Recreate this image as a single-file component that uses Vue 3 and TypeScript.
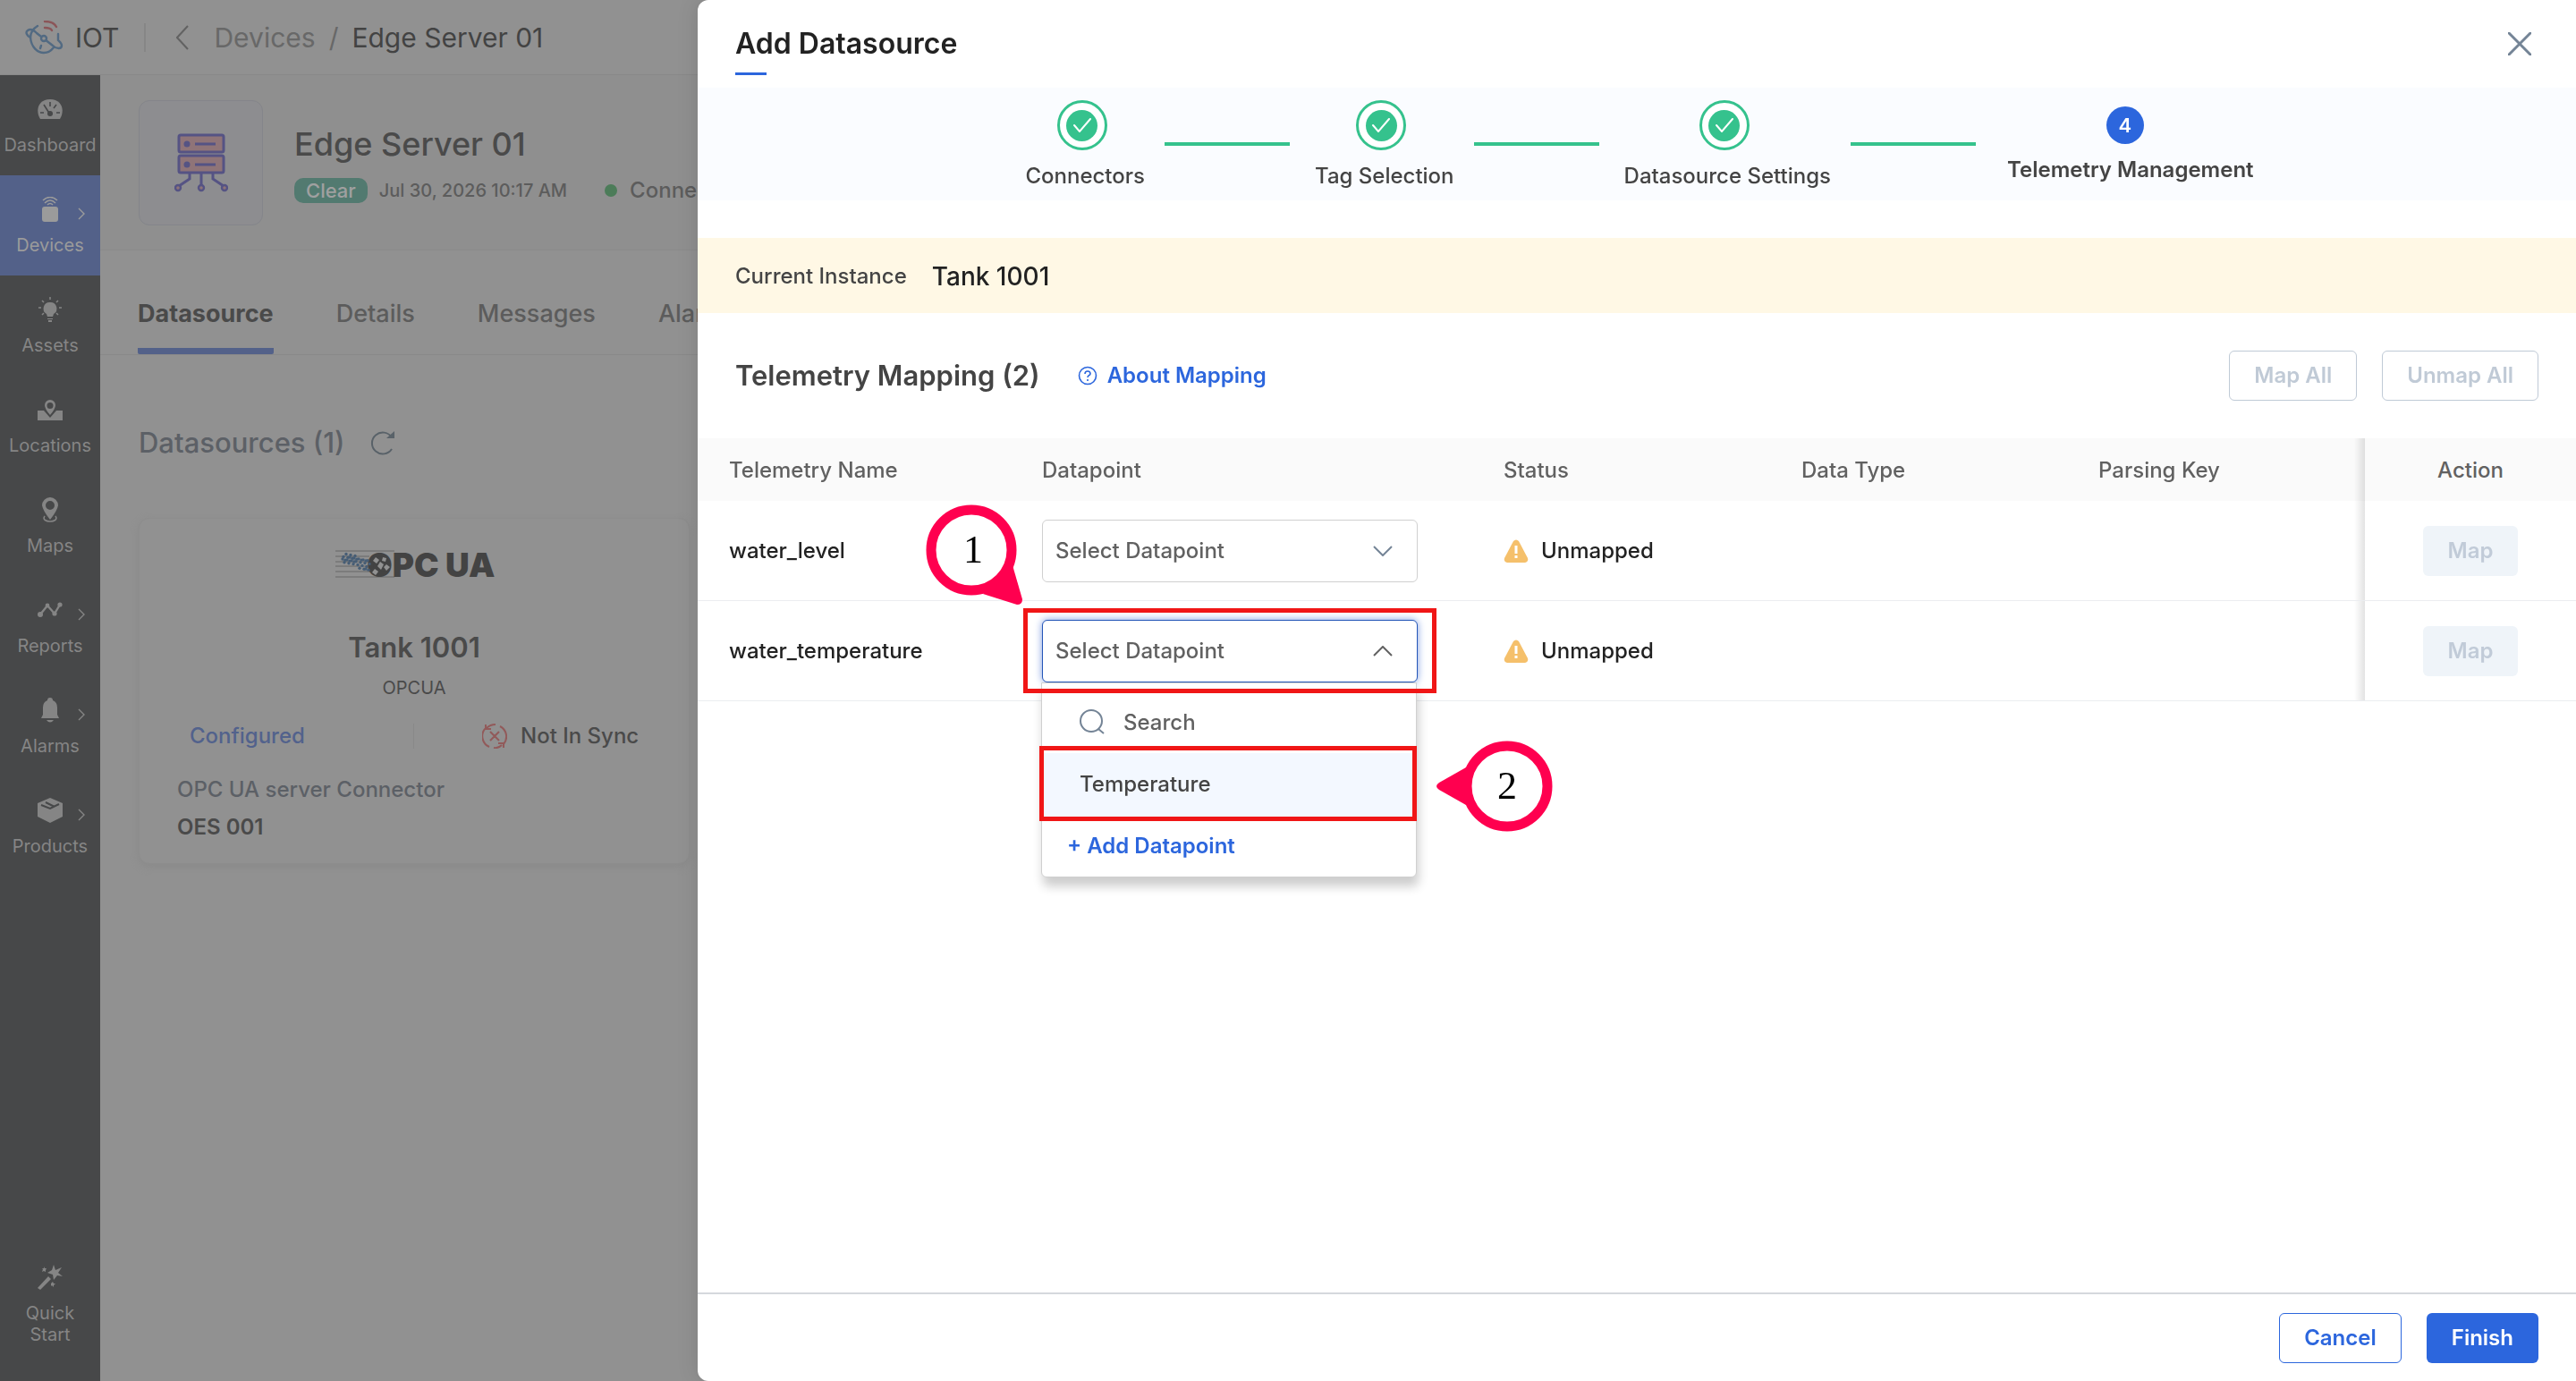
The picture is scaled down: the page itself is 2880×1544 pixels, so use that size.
<script setup lang="ts">
import { ref } from 'vue'

interface NavItem { label: string; icon: string; arrow?: boolean; active?: boolean }
interface Row { name: string; open: boolean }

const nav: NavItem[] = [
  { label: 'Dashboard', icon: 'gauge' },
  { label: 'Devices', icon: 'device', arrow: true, active: true },
  { label: 'Assets', icon: 'bulb' },
  { label: 'Locations', icon: 'location' },
  { label: 'Maps', icon: 'map' },
  { label: 'Reports', icon: 'report', arrow: true },
  { label: 'Alarms', icon: 'bell', arrow: true },
  { label: 'Products', icon: 'box', arrow: true },
]
const tabs = ['Datasource', 'Details', 'Messages', 'Alarms']
const steps = ['Connectors', 'Tag Selection', 'Datasource Settings', 'Telemetry Management']
const rows: Row[] = [
  { name: 'water_level', open: false },
  { name: 'water_temperature', open: true },
]
const query = ref('')
</script>

<template>
  <div class="app">
    <header class="topbar">
      <svg class="brand-logo" viewBox="0 0 44 38" fill="none" stroke-width="2.4" stroke-linecap="round">
        <g stroke="#526a82">
          <path d="M3 11 C0 13 2 17 6 19 M3 11 C6 9 10 11 13 14 L31 28 C35 32 41 32 41 28 C41 25 38 23 37 22 L37 15" />
          <path d="M14 6 C9 9 6 13 6 19 C7 30 14 36 21 36 C25 36 29 34 32 30" />
          <path d="M18 28 L17 31" />
          <circle cx="21" cy="20" r="3" fill="#919191" />
        </g>
        <g stroke="#8b5558"><path d="M22 8 C26 8 29 9 30 11 M22 1 C28 1 33 3 35 7" /></g>
      </svg>
      <span class="brand">IOT</span>
      <span class="topbar-rule"></span>
      <svg class="back" viewBox="0 0 14 28" fill="none" stroke="#626262" stroke-width="2"><path d="M13 1 L1 14 L13 27" /></svg>
      <nav class="crumbs"><a href="#devices">Devices</a><span class="slash">/</span><span>Edge Server 01</span></nav>
    </header>

    <div class="body">
      <aside class="sidebar">
        <a v-for="item in nav" :key="item.label" href="#" class="nav-item" :class="{ active: item.active }">
          <svg class="nav-icon" viewBox="0 0 28 28" fill="currentColor">
            <template v-if="item.icon === 'gauge'">
              <path d="M3 25 C-3 15 1 3 14 3 C27 3 31 15 25 25 Z" />
              <g stroke="#474849" stroke-width="1.6" fill="none"><path d="M14 6 V11 M7 9 L14 20 M21 9 L18 13 M3 18 H7 M21 18 H25" /></g>
              <circle cx="14" cy="19" r="3" fill="#474849" />
            </template>
            <template v-else-if="item.icon === 'device'">
              <rect x="5" y="11" width="18" height="17" rx="3" />
              <g fill="none" stroke="currentColor" stroke-width="1.6"><path d="M6 4 Q14 -3 22 4 M8 7 Q14 1 20 7 M11 9 Q14 6 17 9" /></g>
            </template>
            <template v-else-if="item.icon === 'bulb'">
              <path d="M14 6 A7 7 0 0 1 18 19 L17 22 H11 L10 19 A7 7 0 0 1 14 6 Z M11 24 H17 V25 H11 Z M12 26 H16 V28 H12 Z" />
              <path d="M14 0 V3 M5 4 L7 6 M23 4 L21 6 M1 12 H4 M24 12 H27 M5 20 L7 18 M23 20 L21 18" stroke="currentColor" stroke-width="1.5" />
            </template>
            <template v-else-if="item.icon === 'location'">
              <path d="M0 15 H7 L14 23 L21 15 H28 V26 H0 Z" />
              <path fill-rule="evenodd" d="M14 3 A6 6 0 0 1 20 9 Q20 13 14 20 Q8 13 8 9 A6 6 0 0 1 14 3 Z M14 6 A3.5 3.5 0 1 0 14 13 A3.5 3.5 0 1 0 14 6 Z" />
            </template>
            <template v-else-if="item.icon === 'map'">
              <path fill-rule="evenodd" d="M14 0 A9 9 0 0 1 23 9 Q22 15 14 25 Q6 15 5 9 A9 9 0 0 1 14 0 Z M14 4 A5 5 0 1 0 14 14 A5 5 0 1 0 14 4 Z" />
              <path d="M8 21 C5 25 10 27 14 27 C18 27 23 25 20 21" fill="none" stroke="currentColor" stroke-width="1.6" />
            </template>
            <template v-else-if="item.icon === 'report'">
              <path d="M3 19 L11 9 L19 18 L25 8" fill="none" stroke="currentColor" stroke-width="2.4" />
              <circle cx="3" cy="19" r="3" /><circle cx="11" cy="9" r="2.4" /><circle cx="19" cy="18" r="2.6" /><circle cx="25" cy="8" r="2.6" />
            </template>
            <template v-else-if="item.icon === 'bell'">
              <path d="M14 0 A3 3 0 0 1 17 3 Q22 5 22 11 V19 L24 23 H4 L6 19 V11 Q6 5 11 3 A3 3 0 0 1 14 0 Z M10 25 H18 Q14 30 10 25 Z" />
            </template>
            <template v-else>
              <path d="M14 0 L28 6 V21 L14 28 L0 21 V6 Z" />
              <path d="M4 8 L14 12 L24 7 M9 5 L19 10" stroke="#474849" stroke-width="2" fill="none" />
            </template>
          </svg>
          <span>{{ item.label }}</span>
          <svg v-if="item.arrow" class="nav-arrow" viewBox="0 0 8 14" fill="none" stroke="currentColor" stroke-width="1.4"><path d="M1 1 L7 7 L1 13" /></svg>
        </a>
        <a href="#" class="nav-item quick">
          <svg class="nav-icon" viewBox="0 0 28 28" fill="currentColor">
            <path d="M0 26 L12 13 L15 16 L3 28 Z M18 0 L20 6 L27 3 L23 9 L28 13 L22 12 L18 17 L17 11 L11 9 L16 6 Z" />
            <path d="M7 2 L8 4 L10 4 L9 6 L9 8 L7 7 L5 8 L6 5 L5 4 L7 4 Z M17 19 L18 21 L20 21 L18 23 L18 25 L16 23 L15 24 L15 21 Z" />
          </svg>
          <span>Quick<br />Start</span>
        </a>
      </aside>

      <main class="page">
        <section class="device">
          <div class="device-pic">
            <svg viewBox="0 0 60 66" fill="none" stroke="#555384" stroke-width="3">
              <rect x="5" y="2" width="50" height="19" rx="2" fill="#8f7478" /><rect x="5" y="25" width="50" height="19" rx="2" fill="#8f7478" />
              <path d="M23 12 H46 M23 35 H46 M30 45 V59 M17 45 V51 L5 59 M43 45 V51 L55 59" />
              <g fill="#555384" stroke="none"><circle cx="14" cy="12" r="3.5" /><circle cx="14" cy="35" r="3.5" /></g>
              <g fill="#8f7478" stroke-width="2.4"><circle cx="4" cy="61" r="3" /><circle cx="30" cy="61" r="3" /><circle cx="56" cy="61" r="3" /></g>
            </svg>
          </div>
          <div class="device-info">
            <h1>Edge Server 01</h1>
            <p><span class="badge">Clear</span><span class="date">Jul 30, 2026 10:17 AM</span><i class="dot"></i><span class="conn">Connected</span></p>
          </div>
        </section>
        <nav class="tabs"><a v-for="(t, i) in tabs" :key="t" href="#" :class="{ current: i === 0 }">{{ t }}</a></nav>
        <section class="sources">
          <h2>Datasources (1)
            <svg viewBox="0 0 28 28" fill="none" stroke="#596269" stroke-width="2"><path d="M24 8 A12 12 0 1 0 24 21" /><path d="M27 1 V9 H18 Z" fill="#596269" stroke="none" /></svg>
          </h2>
          <article class="card">
            <svg class="opc" viewBox="0 0 176 34">
              <path d="M0 4 H66 M0 10 H38 M0 16 H38 M0 21 H38 M0 27 H40 M0 33 H66" stroke="#666" stroke-width="1" />
              <text x="35" y="33" class="opc-text">OPC UA</text>
              <g fill="#465d75">
                <circle v-for="n in 34" :key="n" :cx="8 + ((n * 13) % 31)" :cy="4 + ((n * 7) % 13) + ((n * 13) % 31) / 2.6" r="1.7" />
              </g>
              <circle cx="51" cy="19" r="9" fill="#434343" />
              <g fill="#919191"><path d="M45 11 L49 14 L46 18 L42 15 Z M53 11 L57 12 L56 16 L52 15 Z M57 19 L61 22 L57 26 L54 22 Z M44 24 L48 27 L45 31 L41 28 Z M50 16 L54 19 L51 25 L47 21 Z" /></g>
            </svg>
            <h3>Tank 1001</h3>
            <p class="proto">OPCUA</p>
            <div class="state">
              <span class="configured">Configured</span>
              <span class="sync">
                <svg viewBox="0 0 28 28" fill="none" stroke="#925a5a" stroke-width="2"><path d="M4 5 A13 13 0 0 0 8 26 M13 27 Q18 28 22 24 M24 23 A13 13 0 0 0 20 3 M15 1 Q9 1 5 5 M4 1 V6 H10 M24 27 V22 H18 M9 9 L19 19 M19 9 L9 19" /></svg>
                Not In Sync
              </span>
            </div>
            <p class="connector">OPC UA server Connector</p>
            <p class="oes">OES 001</p>
          </article>
        </section>
      </main>
    </div>

    <section class="drawer" role="dialog" aria-labelledby="drawer-title">
      <header class="drawer-head">
        <h2 id="drawer-title">Add Datasource</h2>
        <button class="close" type="button" aria-label="Close">
          <svg viewBox="0 0 26 26" stroke="#748496" stroke-width="3" stroke-linecap="round"><path d="M1 1 L25 25 M25 1 L1 25" /></svg>
        </button>
      </header>

      <ol class="stepper">
        <template v-for="(s, i) in steps" :key="s">
          <li class="step" :class="{ now: i === 3 }">
            <span v-if="i < 3" class="ring"><span class="disc">
              <svg viewBox="0 0 20 16" fill="none" stroke="#fff" stroke-width="2" stroke-linecap="round"><path d="M1 8 L7 15 L19 1" /></svg>
            </span></span>
            <span v-else class="num">4</span>
            <span class="step-label">{{ s }}</span>
          </li>
          <li v-if="i < 3" class="bar" aria-hidden="true"></li>
        </template>
      </ol>

      <div class="instance"><span>Current Instance</span><strong>Tank 1001</strong></div>

      <div class="mapping-head">
        <h3>Telemetry Mapping (2)</h3>
        <a href="#about" class="about">
          <svg viewBox="0 0 22 22" fill="none" stroke="currentColor" stroke-width="1.6"><circle cx="11" cy="11" r="9.5" /><path d="M8 9 Q8 6 11 6 Q14 6 14 9 Q14 10 12 11 Q11 12 11 13 M11 15 V17" /></svg>
          About Mapping
        </a>
        <span class="grow"></span>
        <button class="btn ghost" type="button" disabled>Map All</button>
        <button class="btn ghost" type="button" disabled>Unmap All</button>
      </div>

      <table class="grid">
        <colgroup><col class="c1" /><col class="c2" /><col class="c3" /><col class="c4" /><col class="c5" /><col class="c6" /></colgroup>
        <thead>
          <tr><th>Telemetry Name</th><th>Datapoint</th><th>Status</th><th>Data Type</th><th>Parsing Key</th><th class="action">Action</th></tr>
        </thead>
        <tbody>
          <tr v-for="(r, i) in rows" :key="r.name">
            <td>{{ r.name }}</td>
            <td>
              <div class="field" :class="{ open: r.open }">
                <select :aria-label="'Datapoint for ' + r.name"><option>Select Datapoint</option></select>
                <svg class="caret" viewBox="0 0 22 12" fill="none" stroke-width="2"><path :d="r.open ? 'M1 11 L11 1 L21 11' : 'M1 1 L11 11 L21 1'" /></svg>

                <div v-if="r.open" class="menu">
                  <label class="search">
                    <svg viewBox="0 0 28 28" fill="none" stroke="#748496" stroke-width="2"><circle cx="13" cy="13" r="12" /><path d="M21 22 L27 27" /></svg>
                    <input v-model="query" type="text" placeholder="Search" aria-label="Search" />
                  </label>
                  <button class="option" type="button">Temperature</button>
                  <button class="add" type="button">+ Add Datapoint</button>
                  <span class="mark mark-option"></span>
                </div>
                <span v-if="r.open" class="mark mark-field"></span>

                <svg v-if="i === 0" class="pin pin-one" viewBox="0 0 110 114">
                  <path d="M97 68 L108 106 Q108 112 102 112 L64 100 Z" fill="#ff004f" />
                  <circle cx="51" cy="51" r="45" fill="#fff" stroke="#ff004f" stroke-width="11" />
                  <text x="53" y="65" text-anchor="middle">1</text>
                </svg>
                <svg v-else class="pin pin-two" viewBox="0 0 132 102">
                  <path d="M34 30 L4 47 Q-2 51 4 55 L34 72 Z" fill="#ff004f" />
                  <circle cx="80" cy="51" r="45" fill="#fff" stroke="#ff004f" stroke-width="11" />
                  <text x="80" y="65" text-anchor="middle">2</text>
                </svg>
              </div>
            </td>
            <td>
              <span class="status">
                <svg viewBox="0 0 28 26"><path d="M11 2 Q14 -1 17 2 L27 21 Q28 25 24 26 H4 Q0 25 1 21 Z" fill="#f5c06b" /><path d="M14 7 V16 M14 18 V21" stroke="#fff" stroke-width="3" /></svg>
                Unmapped
              </span>
            </td>
            <td></td>
            <td></td>
            <td class="action"><button class="btn map" type="button" disabled>Map</button></td>
          </tr>
        </tbody>
      </table>

      <footer class="drawer-foot">
        <button class="btn cancel" type="button">Cancel</button>
        <button class="btn finish" type="button">Finish</button>
      </footer>
    </section>
  </div>
</template>

<style>
body { background: #919191; }
</style>

<style scoped>
* { box-sizing: border-box; }
h1, h2, h3, p, ol { margin: 0; padding: 0; }
a { text-decoration: none; color: inherit; }
button, input, select { font: inherit; }
.app { font-family: Inter, "Liberation Sans", sans-serif; font-size: 24px; line-height: 32px; min-height: 100vh; display: flex; flex-direction: column; color: #4a4a4a; overflow: hidden; }

.topbar { height: 84px; display: flex; align-items: center; padding-left: 28px; border-bottom: 1px solid #898989; font-size: 30px; color: #434343; }
.brand-logo { width: 44px; height: 38px; margin-right: 12px; }
.topbar-rule { width: 2px; height: 32px; background: #868686; margin: 0 34px 0 28px; }
.back { width: 14px; height: 28px; margin-right: 28px; }
.crumbs { display: flex; gap: 15px; white-space: nowrap; }
.crumbs a, .slash { color: #686868; }

.body { flex: 1; display: flex; }
.sidebar { width: 112px; flex: none; background: #474849; display: flex; flex-direction: column; }
.nav-item { position: relative; height: 112px; display: flex; flex-direction: column; align-items: center; padding-top: 24px; gap: 14px; font-size: 20px; line-height: 24px; color: #858585; text-align: center; }
.nav-item.active { background: #536189; color: #9b9b9b; }
.nav-icon { width: 28px; height: 28px; }
.nav-arrow { position: absolute; width: 8px; height: 14px; right: 17px; top: 36px; }
.quick { margin-top: auto; height: 140px; padding-top: 10px; }

.page { flex: 1; min-width: 0; }
.device { height: 196px; padding: 28px 43px; display: flex; gap: 35px; border-bottom: 1px solid #8a8a8a; background: #8f8f8f; }
.device-pic { width: 139px; height: 140px; border: 1px solid #84858a; border-radius: 12px; background: #8d8d90; display: flex; align-items: center; justify-content: center; }
.device-pic svg { width: 60px; height: 66px; }
.device-info { padding-top: 27px; }
.device-info h1 { font-size: 36px; line-height: 44px; font-weight: 500; }
.device-info p { display: flex; align-items: center; margin-top: 16px; font-size: 22px; line-height: 28px; color: #5c5c5c; }
.badge { background: #527a70; color: #a0a0a0; border-radius: 10px; padding: 0 13px; font-weight: 500; }
.date { margin: 0 42px 0 13px; font-size: 20px; font-weight: 500; }
.dot { width: 14px; height: 14px; border-radius: 50%; background: #4c7c59; margin-right: 14px; }
.conn { font-size: 24px; font-weight: 500; }
.tabs { height: 117px; display: flex; gap: 70px; padding-left: 42px; border-bottom: 1px solid #898989; font-size: 27px; font-weight: 500; color: #5c5c5c; }
.tabs a { padding-top: 55px; border-bottom: 7px solid transparent; }
.tabs .current { font-weight: 700; color: #4a4a4a; border-color: #536189; border-radius: 2px; }
.sources { padding: 78px 43px 0; }
.sources h2 { display: flex; align-items: center; gap: 28px; font-size: 31px; line-height: 40px; font-weight: 500; color: #5c6066; }
.sources h2 svg { width: 28px; height: 28px; }
.card { margin-top: 64px; width: 616px; height: 387px; border-radius: 12px; border: 1px solid #8d8d8d; box-shadow: 0 3px 10px #8a8a8a; background: #919191; text-align: center; padding: 32px 42px; }
.opc { width: 176px; height: 34px; display: block; margin: 0 auto; overflow: visible; }
.opc-text { font: 900 37px Inter, sans-serif; fill: #434343; }
.card h3 { margin-top: 58px; font-size: 31px; line-height: 40px; font-weight: 600; }
.proto { font-size: 20px; line-height: 24px; margin-top: 13px; }
.state { display: flex; margin-top: 28px; line-height: 28px; font-weight: 500; }
.configured { width: 50%; color: #52628c; border-right: 1px solid #888; text-align: left; padding-left: 14px; }
.sync { width: 50%; display: flex; align-items: center; gap: 15px; padding-left: 76px; white-space: nowrap; }
.sync svg { width: 28px; height: 28px; }
.connector { text-align: left; margin-top: 30px; font-weight: 500; color: #5c6066; }
.oes { text-align: left; margin-top: 10px; font-weight: 600; }

.drawer { position: fixed; top: 0; bottom: 0; right: 0; left: 780px; background: #fff; border-radius: 12px 0 0 12px; display: flex; flex-direction: column; color: #444; font-weight: 500; box-shadow: 0 0 24px rgba(0, 0, 0, .12); }
.drawer-head { height: 98px; padding: 29px 42px 0; display: flex; justify-content: space-between; align-items: flex-start; }
.drawer-head h2 { font-size: 32px; line-height: 40px; font-weight: 600; color: #222; }
.drawer-head h2::after { content: ""; display: block; width: 35px; height: 3px; background: #2c66dd; margin-top: 12px; }
.close { border: 0; background: none; padding: 7px 8px; line-height: 0; }
.close svg { width: 26px; height: 26px; }
.stepper { list-style: none; height: 126px; background: #fafcff; display: flex; justify-content: center; gap: 25px; padding: 14px 0 0 6px; }
.step { display: flex; flex-direction: column; align-items: center; gap: 13px; white-space: nowrap; }
.ring { width: 56px; height: 56px; margin-right: 7px; border: 3px solid #35c28d; border-radius: 50%; background: #fff; display: flex; align-items: center; justify-content: center; }
.disc { width: 35px; height: 35px; border-radius: 50%; background: #35c28d; display: flex; align-items: center; justify-content: center; }
.disc svg { width: 20px; height: 16px; }
.num { width: 42px; height: 42px; margin-right: 12px; border-radius: 50%; background: #2c66dd; color: #fff; font-size: 22px; font-weight: 600; line-height: 42px; text-align: center; }
.now { padding-top: 7px; margin-left: 7px; font-weight: 600; }
.bar { width: 140px; height: 4px; background: #35c28d; margin: 47px 3px 0 -3px; }
.instance { margin-top: 42px; height: 84px; background: #fff8e5; display: flex; align-items: center; gap: 28px; padding: 1px 42px 0; }
.instance strong { font-size: 28px; font-weight: 500; color: #222; }
.mapping-head { height: 140px; padding: 0 42px; display: flex; align-items: center; }
.mapping-head h3 { font-size: 31px; font-weight: 600; }
.about { display: flex; align-items: center; gap: 11px; margin-left: 42px; color: #2c66dd; font-weight: 600; }
.about svg { width: 22px; height: 22px; }
.grow { flex: 1; }
.btn { height: 56px; border-radius: 6px; border: 1px solid transparent; padding: 0 27px; font-weight: 600; background: #fff; white-space: nowrap; }
.ghost { border-color: #bfcad6; color: #c0cad6; }
.ghost + .ghost { margin-left: 28px; }
.grid { width: 100%; border-collapse: separate; border-spacing: 0; table-layout: fixed; }
.c1 { width: 385px; } .c3 { width: 333px; } .c4 { width: 332px; } .c5 { width: 298px; } .c6 { width: 236px; }
th, td { text-align: left; padding: 0; }
th:first-child, td:first-child { padding-left: 35px; }
th { height: 70px; padding-top: 1px; background: #fafafa; font-weight: 500; color: #616161; }
td { height: 112px; border-bottom: 1px solid #ebedf0; color: #222; }
th.action, td.action { text-align: center; position: relative; }
.action::before { content: ""; position: absolute; right: 100%; top: 0; bottom: 0; width: 12px; background: linear-gradient(to right, rgba(0, 0, 0, 0), rgba(0, 0, 0, .11)); }
.map { background: #eff4f9; color: #c1cbd8; }
.field { position: relative; width: 420px; height: 70px; }
.field select { appearance: none; width: 100%; height: 100%; border: 1px solid #d0d0d0; border-radius: 6px; background: #fff; color: #616161; padding: 0 14px; }
.field.open select { border: 1px solid #2456b8; box-shadow: 0 0 8px #7d9be0; }
.caret { position: absolute; right: 28px; top: 29px; width: 22px; height: 12px; stroke: #748496; }
.open .caret { stroke: #616161; }
.menu { position: absolute; top: 70px; left: -1px; width: 420px; height: 218px; background: #fff; border: 1px solid #d0d0d0; border-radius: 0 0 6px 6px; box-shadow: 2px 10px 12px rgba(0, 0, 0, .2); z-index: 1; }
.search { display: flex; align-items: center; gap: 21px; height: 78px; padding: 9px 0 0 42px; }
.search svg { width: 28px; height: 28px; }
.search input { border: 0; width: 260px; height: 36px; padding: 0; outline: 0; background: none; color: #616161; }
.search input::placeholder { color: #616161; opacity: 1; }
.option, .add { display: block; width: 100%; border: 0; text-align: left; background: #fff; }
.option { height: 72px; background: #f3f8ff; border-bottom: 1px solid #d0d0d0; padding: 0 0 0 42px; color: #444; }
.add { height: 64px; padding: 0 0 0 28px; color: #2c66dd; font-weight: 600; border-radius: 6px; }
.mark { position: absolute; border: 5px solid #f01616; z-index: 2; pointer-events: none; }
.mark-field { left: -21px; top: -13px; width: 462px; height: 95px; }
.mark-option { left: -3px; top: 70px; width: 422px; height: 84px; }
.pin { position: absolute; z-index: 3; font: 44px "Liberation Serif", serif; }
.pin-one { left: -130px; top: -17px; width: 110px; height: 114px; }
.pin-two { left: 440px; top: 135px; width: 132px; height: 102px; }
.status { display: flex; align-items: center; gap: 14px; }
.status svg { width: 28px; height: 26px; }
.drawer-foot { margin-top: auto; height: 99px; border-top: 2px solid #d5d8dd; display: flex; justify-content: flex-end; gap: 28px; padding: 21px 42px 0; }
.cancel { border-color: #2c66dd; color: #2c66dd; }
.finish { background: #2c66dd; color: #fff; }
</style>
